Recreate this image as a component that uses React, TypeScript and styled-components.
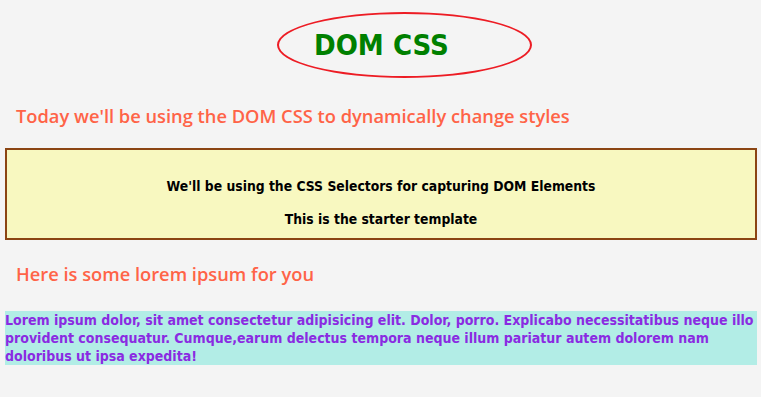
import React from "react";
import styled, { createGlobalStyle } from "styled-components";

const Global = createGlobalStyle`
  html, body { margin: 0; padding: 0; background: #f4f4f4; }
  body { font-family: "Liberation Sans", Arial, sans-serif; }
`;

const Page = styled.div`
  display: flex;
  flex-direction: column;
  padding: 12px 4px 0 5px;
`;

const TitleRow = styled.div`
  display: flex;
  justify-content: center;
  padding-left: 47px;
`;

const TitleOval = styled.h1`
  margin: 0;
  width: 255px;
  height: 66px;
  box-sizing: border-box;
  border: 2px solid #ed1c24;
  border-radius: 50%;
  display: flex;
  align-items: center;
  padding-left: 35px;
  color: #008000;
  font-family: "Liberation Sans Narrow", "DejaVu Sans Condensed", sans-serif;
  font-weight: 700;
  font-size: 29px;
`;

const Heading = styled.h2<{ $top: number }>`
  margin: ${(p) => p.$top}px 0 0 11px;
  color: #ff6347;
  font-family: "Open Sans", "Noto Sans", sans-serif;
  font-weight: 600;
  font-size: 18.3px;
  line-height: 24px;
`;

const Box = styled.div`
  margin-top: 20px;
  border: 2px solid #8b4513;
  background: #f8f8c0;
  height: 92px;
  box-sizing: border-box;
  display: flex;
  flex-direction: column;
  align-items: center;
  padding-top: 27px;
  gap: 15px;
`;

const BoxLine = styled.p`
  margin: 0;
  font-family: "Liberation Sans Narrow", "DejaVu Sans Condensed", sans-serif;
  font-weight: 700;
  font-size: 13.8px;
  line-height: 18px;
  color: #000;
`;

const Lorem = styled.p`
  margin: 25px 0 0 0;
  background: #b2ede6;
  color: #8a2be2;
  font-family: "Liberation Sans Narrow", "DejaVu Sans Condensed", sans-serif;
  font-weight: 700;
  font-size: 14px;
  line-height: 18px;
`;

export default function App() {
  return (
    <>
      <Global />
      <Page>
        <TitleRow>
          <TitleOval>DOM CSS</TitleOval>
        </TitleRow>
        <Heading $top={26}>Today we'll be using the DOM CSS to dynamically change styles</Heading>
        <Box>
          <BoxLine>We'll be using the CSS Selectors for capturing DOM Elements</BoxLine>
          <BoxLine>This is the starter template</BoxLine>
        </Box>
        <Heading $top={22}>Here is some lorem ipsum for you</Heading>
        <Lorem>
          Lorem ipsum dolor, sit amet consectetur adipisicing elit. Dolor, porro. Explicabo necessitatibus neque illo provident consequatur. Cumque,earum delectus tempora neque illum pariatur autem dolorem nam doloribus ut ipsa expedita!
        </Lorem>
      </Page>
    </>
  );
}
